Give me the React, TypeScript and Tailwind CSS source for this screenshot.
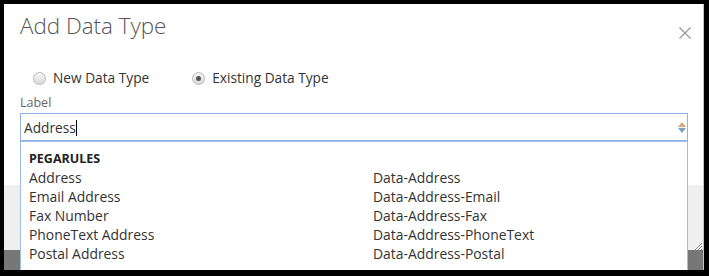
import React from 'react';

const rows: [string, string][] = [
  ['Address', 'Data-Address'],
  ['Email Address', 'Data-Address-Email'],
  ['Fax Number', 'Data-Address-Fax'],
  ['PhoneText Address', 'Data-Address-PhoneText'],
  ['Postal Address', 'Data-Address-Postal'],
];

const Radio: React.FC<{ checked?: boolean; label: string }> = ({ checked, label }) => (
  <label className="flex items-center">
    <span className="w-[13px] h-[13px] rounded-full border border-[#b8b8b8] bg-gradient-to-b from-[#f6f6f6] to-[#d9d9d9] flex items-center justify-center">
      {checked && <span className="w-[5px] h-[5px] rounded-full bg-[#555]" />}
    </span>
    <span className="ml-[7px] text-[13.7px] leading-[20px] text-[#333]">{label}</span>
  </label>
);

export default function App() {
  return (
    <div
      className="w-[709px] h-[276px] bg-black pt-[4px] pl-[4px] pr-[5px] pb-[6px]"
      style={{ fontFamily: '"Open Sans", "Liberation Sans", sans-serif' }}
    >
      <div className="h-full flex flex-col bg-white border-r border-[#c4c4c4] overflow-hidden">
        {/* body */}
        <div className="h-[181px] shrink-0 px-[16px] pt-[7px] relative z-10">
          <div className="flex items-start justify-between">
            <h1 className="text-[22.4px] leading-[29px] font-light text-[#555]">Add Data Type</h1>
            <button className="mt-[16px] mr-[-4px] text-[#9a9a9a]">
              <svg width="12" height="12" viewBox="0 0 12 12">
                <path d="M0.5 0.5 L11.5 11.5 M11.5 0.5 L0.5 11.5" stroke="currentColor" strokeWidth="1.3" />
              </svg>
            </button>
          </div>

          <div className="flex items-center mt-[28px] ml-[13px] gap-[43px]">
            <Radio label="New Data Type" />
            <Radio label="Existing Data Type" checked />
          </div>

          <div className="mt-[7px] text-[12.5px] leading-[16px] text-[#666]">Label</div>

          <div className="relative mt-[2px] mr-[-1px]">
            <div className="h-[28px] border border-[#8cb3ea] pl-[3px] pt-[3px] text-[13.7px] leading-[22px] text-[#333] flex items-start">
              <span>Address</span>
              <span className="inline-block w-px h-[16px] bg-black mt-[3px]" />
            </div>
            <div className="absolute right-[2px] top-[9px] flex flex-col gap-[1px]">
              <svg width="8" height="5" viewBox="0 0 8 5">
                <path d="M0 5 L4 0 L8 5 Z" fill="#d9a679" />
              </svg>
              <svg width="8" height="5" viewBox="0 0 8 5">
                <path d="M0 0 L8 0 L4 5 Z" fill="#7fa0c2" />
              </svg>
            </div>

            {/* suggestions list */}
            <div className="absolute left-0 right-0 top-full h-[140px] bg-white border border-[#9dbfec] pl-[8px] pt-[7px]">
              <div className="grid grid-cols-[344px_1fr] text-[13.9px] leading-[19px] text-[#333]">
                <div className="text-[12.5px] font-bold text-[#222]">PEGARULES</div>
                <div />
                {rows.map(([label, cls]) => (
                  <React.Fragment key={cls}>
                    <div>{label}</div>
                    <div>{cls}</div>
                  </React.Fragment>
                ))}
              </div>
            </div>
          </div>
        </div>

        {/* footer */}
        <div className="h-[65px] shrink-0 bg-[#efefef] relative">
          <svg className="absolute right-[1px] bottom-[0px]" width="8" height="8" viewBox="0 0 8 8">
            <path d="M8 1 L1 8 M8 4 L4 8 M8 7 L7 8" stroke="#8a8a8a" strokeWidth="1" />
          </svg>
        </div>
        <div className="flex-1 bg-[#777]" />
      </div>
    </div>
  );
}
